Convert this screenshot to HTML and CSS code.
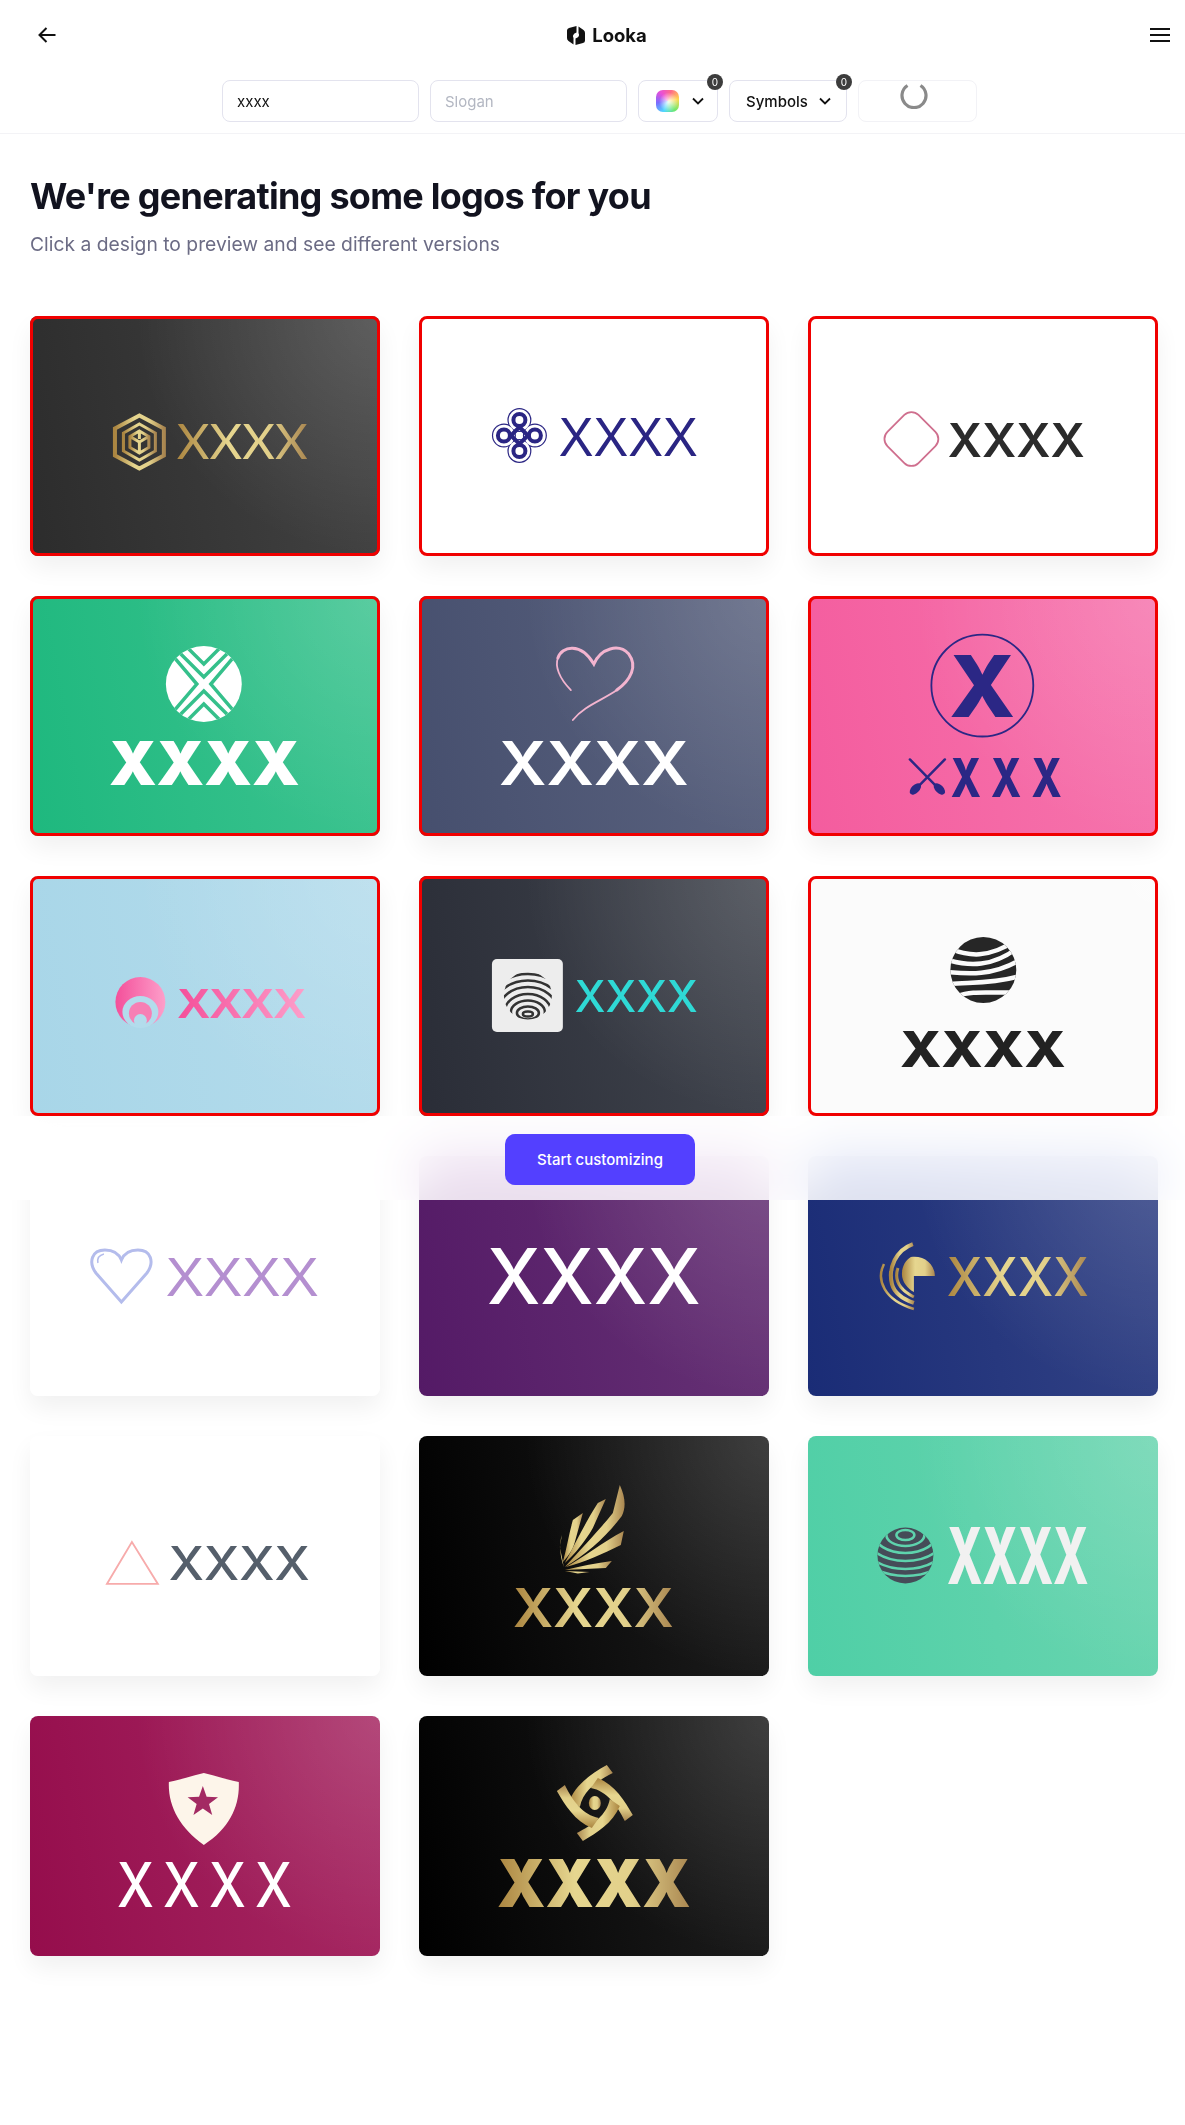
FILE: index.html
```html
<!DOCTYPE html>
<html lang="en">
<head>
    <meta charset="UTF-8">
    <meta name="viewport" content="width=device-width, initial-scale=1.0">
    <title>Looka</title>
    <link rel="stylesheet" href="styles.css">
</head>
<body>

    <!-- Top bar -->
    <header class="topbar">
        <button class="icon-btn">
            <svg width="18" height="18" viewBox="0 0 18 18" fill="none" stroke="#111" stroke-width="2"><path d="M17.5 9H1.5M8.5 2l-7 7 7 7"/></svg>
        </button>
        <div class="brand">
            <svg width="20" height="21" viewBox="0 0 20 20" fill="#111"><path d="M10.500 0.500L3 2.500Q1 3 1 5V12.500Q1 14.500 2.500 15.500L7.500 19V12.500Q5.500 9 10.500 7Z"/><path d="M9.500 19.500L17 17.500Q19 17 19 15V7.500Q19 5.500 17.500 4.500L12.500 1V7.500Q14.500 11 9.500 13Z"/></svg>
            <span>Looka</span>
        </div>
        <button class="icon-btn">
            <svg width="20" height="14" viewBox="0 0 20 14" fill="none" stroke="#111" stroke-width="2"><path d="M0 1H20M0 7H20M0 13H20"/></svg>
        </button>
    </header>

    <!-- Filters -->
    <div class="toolbar">
        <div class="field field-text">xxxx</div>
        <div class="field field-text field-empty">Slogan</div>
        <div class="field field-color">
            <span class="swatch"></span>
            <svg class="chevron" width="12" height="8" viewBox="0 0 12 8" fill="none" stroke="#111" stroke-width="1.8"><path d="M1 1.500l5 5 5-5"/></svg>
            <span class="badge">0</span>
        </div>
        <div class="field field-symbols">
            Symbols
            <svg class="chevron" width="12" height="8" viewBox="0 0 12 8" fill="none" stroke="#111" stroke-width="1.800"><path d="M1 1.500l5 5 5-5"/></svg>
            <span class="badge">0</span>
        </div>
        <div class="field field-loading">
            <svg width="28" height="28" viewBox="0 0 28 28" fill="none" stroke="#8a8a8a" stroke-width="3.200"><path d="M7.500 4.500A12 12 0 1 0 20.500 4.500"/></svg>
        </div>
    </div>

    <div class="intro">
        <h1>We're generating some logos for you</h1>
        <p>Click a design to preview and see different versions</p>
    </div>

    <div class="results">
        <div class="logo-grid">

            <!-- 1 -->
            <div class="card picked bg-graphite">
                <svg class="logo" viewBox="0 0 350 240">
                    <defs>
                        <linearGradient id="gold" x1="0" y1="0" x2="1" y2="0">
                            <stop offset="0" stop-color="#ab8540"/>
                            <stop offset=".4" stop-color="#e6d68f"/>
                            <stop offset=".7" stop-color="#e2d08a"/>
                            <stop offset="1" stop-color="#a98650"/>
                        </linearGradient>
                        <linearGradient id="pink" x1="0" y1="0" x2="1" y2="0">
                            <stop offset="0" stop-color="#f44f9a"/>
                            <stop offset="1" stop-color="#fd9fca"/>
                        </linearGradient>
                        <clipPath id="clip8"><circle cx="109" cy="119.500" r="24"/></clipPath>
                        <clipPath id="clip9"><circle cx="175.500" cy="94" r="33"/></clipPath>
                        <clipPath id="clip15"><circle cx="97.500" cy="119.500" r="28"/></clipPath>
                        <clipPath id="clip4"><circle cx="174" cy="88" r="38"/></clipPath>
                    </defs>
                    <g fill="none" stroke="url(#gold)">
                        <path stroke-width="4" d="M109.500 99.500L134 112.500V139.500L109.500 152.500L85 139.500V112.500Z"/>
                        <path stroke-width="3" d="M109.500 108L125.500 117V135L109.500 144L93.500 135V117Z"/>
                        <path stroke-width="3" d="M109.500 115L119 120.500V131.500L109.500 137L100 131.500V120.500ZM109.500 115V123M100 120.500L109.500 126L119 120.500M109.500 126V137"/>
                    </g>
                    <text class="wm-thin" x="147" y="143" font-size="49" textLength="131" lengthAdjust="spacingAndGlyphs" fill="url(#gold)">XXXX</text>
                </svg>
            </div>

            <!-- 2 -->
            <div class="card picked bg-white">
                <svg class="logo" viewBox="0 0 350 240">
                    <g fill="#2a2583">
                        <circle cx="100.500" cy="104" r="12"/><circle cx="100.500" cy="135" r="12"/>
                        <circle cx="85" cy="119.500" r="12"/><circle cx="116" cy="119.500" r="12"/>
                    </g>
                    <g fill="#fff">
                        <circle cx="100.500" cy="104" r="10.800"/><circle cx="100.500" cy="135" r="10.800"/>
                        <circle cx="85" cy="119.500" r="10.800"/><circle cx="116" cy="119.500" r="10.800"/>
                    </g>
                    <g fill="none" stroke="#2a2583" stroke-width="4">
                        <circle cx="100.500" cy="104" r="6"/><circle cx="100.500" cy="135" r="6"/>
                        <circle cx="85" cy="119.500" r="6"/><circle cx="116" cy="119.500" r="6"/>
                        <path d="M100.500 111L109 119.500L100.500 128L92 119.500Z"/>
                    </g>
                    <text class="wm-regular" x="140" y="140" font-size="56" textLength="139" lengthAdjust="spacingAndGlyphs" fill="#2a2583">XXXX</text>
                </svg>
            </div>

            <!-- 3 -->
            <div class="card picked bg-white">
                <svg class="logo" viewBox="0 0 350 240">
                    <rect x="81.500" y="101" width="44" height="44" rx="10" transform="rotate(45 103.500 123)" fill="none" stroke="#cf6f8e" stroke-width="1.800"/>
                    <text class="wm-semi" x="140" y="141" font-size="46" textLength="137" lengthAdjust="spacingAndGlyphs" fill="#2b2b2b">XXXX</text>
                </svg>
            </div>

            <!-- 4 -->
            <div class="card picked bg-green">
                <svg class="logo" viewBox="0 0 350 240">
                    <circle cx="174" cy="88" r="38" fill="#fff"/>
                    <g clip-path="url(#clip4)" fill="none" stroke="#35c08b" stroke-width="3.500">
                        <path d="M134 41L174 81L214 41M134 28L174 68L214 28"/>
                        <path d="M134 135L174 95L214 135M134 148L174 108L214 148"/>
                        <path d="M127 41L167 88L127 135M221 41L181 88L221 135" stroke-width="3.500"/>
                    </g>
                    <text class="wm-heavy" x="79" y="189" font-size="61" textLength="191" lengthAdjust="spacingAndGlyphs" fill="#fff">XXXX</text>
                </svg>
            </div>

            <!-- 5 -->
            <div class="card picked bg-slate">
                <svg class="logo" viewBox="0 0 350 240">
                    <g fill="none" stroke="#f3b4cf" stroke-linecap="round">
                        <path stroke-width="3" d="M139 62C143 50 162 46 175 68C182 52 200 47 210 58C219 70 212 84 198 94"/>
                        <path stroke-width="1.800" d="M139 62C136 70 140 82 152 94M198 94C184 104 165 110 154 124"/>
                    </g>
                    <text class="wm-semi" x="80" y="189" font-size="61" textLength="190" lengthAdjust="spacingAndGlyphs" fill="#fff">XXXX</text>
                </svg>
            </div>

            <!-- 6 -->
            <div class="card picked bg-pink">
                <svg class="logo" viewBox="0 0 350 240">
                    <circle cx="174.500" cy="89.500" r="51" fill="none" stroke="#2b2785" stroke-width="1.800"/>
                    <text class="wm-black" x="174.500" y="121" font-size="85" text-anchor="middle" textLength="66" lengthAdjust="spacingAndGlyphs" fill="#2b2785">X</text>
                    <g fill="none" stroke="#2b2785" stroke-width="2.500" stroke-linecap="round">
                        <path d="M102 163.500L131 193M137 163.500L108 193"/>
                    </g>
                    <g fill="#2b2785">
                        <ellipse cx="131.500" cy="193" rx="7" ry="4" transform="rotate(45 131.500 193)"/>
                        <ellipse cx="107.500" cy="193" rx="7" ry="4" transform="rotate(-45 107.500 193)"/>
                    </g>
                    <text class="wm-black" transform="scale(.75 1)" x="190.500" y="201" font-size="53" textLength="148" lengthAdjust="spacing" fill="#2b2785">XXX</text>
                </svg>
            </div>

            <!-- 7 -->
            <div class="card picked bg-sky">
                <svg class="logo" viewBox="0 0 350 240">
                    <circle cx="110.500" cy="126" r="25" fill="url(#pink)"/>
                    <ellipse cx="110.500" cy="136" rx="18" ry="16" fill="#b3dcec"/>
                    <circle cx="110.500" cy="137.500" r="11.500" fill="#f77fb4"/>
                    <circle cx="110.500" cy="144.500" r="6.500" fill="#b3dcec"/>
                    <text class="wm-bold" x="148" y="142" font-size="43" textLength="128" lengthAdjust="spacingAndGlyphs" fill="url(#pink)">XXXX</text>
                </svg>
            </div>

            <!-- 8 -->
            <div class="card picked bg-ink">
                <svg class="logo" viewBox="0 0 350 240">
                    <rect x="73" y="83" width="71" height="73" rx="5" fill="#ededed"/>
                    <g clip-path="url(#clip8)" fill="none" stroke="#333" stroke-width="2.500">
                        <ellipse cx="109" cy="138" rx="5" ry="2.500"/>
                        <ellipse cx="109" cy="137" rx="11" ry="6.500"/>
                        <ellipse cx="109" cy="136" rx="17" ry="11.500"/>
                        <ellipse cx="109" cy="135" rx="23" ry="17"/>
                        <ellipse cx="109" cy="134" rx="29" ry="23"/>
                        <ellipse cx="109" cy="134" rx="35" ry="29.500"/>
                        <ellipse cx="109" cy="134" rx="41" ry="36"/>
                    </g>
                    <text class="wm-medium" x="156" y="136" font-size="44" textLength="123" lengthAdjust="spacingAndGlyphs" fill="#2fd9d5">XXXX</text>
                </svg>
            </div>

            <!-- 9 -->
            <div class="card picked bg-offwhite">
                <svg class="logo" viewBox="0 0 350 240">
                    <circle cx="175.500" cy="94" r="33" fill="#262626"/>
                    <g clip-path="url(#clip9)" fill="none" stroke="#fbfbfb" stroke-width="4.500">
                        <path d="M140 72C160 80 180 84 212 62"/>
                        <path d="M140 84C160 90 185 92 212 70"/>
                        <path d="M140 96C160 98 185 100 212 84"/>
                        <path d="M142 108C160 106 185 108 212 100"/>
                        <path d="M150 120C165 114 185 118 212 116"/>
                    </g>
                    <text class="wm-black" x="92" y="191" font-size="50" textLength="166" lengthAdjust="spacingAndGlyphs" fill="#222">XXXX</text>
                </svg>
            </div>

            <!-- 10 -->
            <div class="card bg-white">
                <svg class="logo" viewBox="0 0 350 240">
                    <path d="M91.500 146L66 117C58 106 62 94 75 94C83 94 89 98 91.500 104C94 98 100 94 108 94C121 94 125 106 117 117Z" fill="none" stroke="#b4bcec" stroke-width="3"/>
                    <path d="M68 107C67 102 70 99 74 98" fill="none" stroke="#b4bcec" stroke-width="1.500"/>
                    <text class="wm-regular" x="136" y="140" font-size="56" textLength="153" lengthAdjust="spacingAndGlyphs" fill="#b48fd0">XXXX</text>
                </svg>
            </div>

            <!-- 11 -->
            <div class="card bg-purple">
                <svg class="logo" viewBox="0 0 350 240">
                    <text class="wm-medium" x="68" y="148" font-size="77" textLength="214" lengthAdjust="spacingAndGlyphs" fill="#fff">XXXX</text>
                </svg>
            </div>

            <!-- 12 -->
            <div class="card bg-navy">
                <svg class="logo" viewBox="0 0 350 240">
                    <path d="M103 101C116 99 127 108 127 120L106 120L106 136C100 133 94 126 94 118C94 110 98 104 103 101Z" fill="url(#gold)"/>
                    <g fill="none" stroke="url(#gold)">
                        <path stroke-width="4" d="M105 88C88 94 80 112 84 128C86 136 92 142 106 147"/>
                        <path stroke-width="2.500" d="M76 108C68 124 76 144 106 153"/>
                        <path stroke-width="3" d="M90 112C86 124 92 134 106 141"/>
                    </g>
                    <text class="wm-medium" x="139" y="140" font-size="53" textLength="142" lengthAdjust="spacingAndGlyphs" fill="url(#gold)">XXXX</text>
                </svg>
            </div>

            <!-- 13 -->
            <div class="card bg-white">
                <svg class="logo" viewBox="0 0 350 240">
                    <path d="M102 106L128 148H77Z" fill="none" stroke="#f7abab" stroke-width="1.800"/>
                    <text class="wm-medium" x="139" y="144" font-size="46" textLength="141" lengthAdjust="spacingAndGlyphs" fill="#555f6b">XXXX</text>
                </svg>
            </div>

            <!-- 14 -->
            <div class="card bg-black">
                <svg class="logo" viewBox="0 0 350 240">
                    <g fill="url(#gold)" transform="translate(-2 0)">
                        <path d="M203 49C209 62 209 72 205 80C190 100 170 118 148 131C165 112 186 90 196 77Z"/>
                        <path d="M189 63L176 92C168 106 158 118 148 127C158 108 170 84 181 67Z"/>
                        <path d="M166 77L158 106C156 114 150 122 146 126C150 112 152 98 156 84Z"/>
                        <path d="M145 99L143 111L147 131C143 120 142 108 145 99Z"/>
                        <path d="M207 95L204 109C186 118 168 126 149 131C166 122 186 106 207 95Z"/>
                        <path d="M195 125L189 132L148 134C164 130 180 127 195 125Z"/>
                        <path d="M173 136L148 135L161 137.500Z"/>
                    </g>
                    <text class="wm-semi" x="94" y="191" font-size="53" textLength="161" lengthAdjust="spacingAndGlyphs" fill="url(#gold)">XXXX</text>
                </svg>
            </div>

            <!-- 15 -->
            <div class="card bg-mint">
                <svg class="logo" viewBox="0 0 350 240">
                    <circle cx="97.500" cy="119.500" r="28" fill="#454c58"/>
                    <g clip-path="url(#clip15)" fill="none" stroke="#5ed3ad" stroke-width="2.500">
                        <ellipse cx="97.500" cy="99" rx="9" ry="5"/>
                        <ellipse cx="97.500" cy="99" rx="19" ry="11"/>
                        <ellipse cx="97.500" cy="97" rx="32" ry="20"/>
                        <ellipse cx="97.500" cy="96" rx="42" ry="29"/>
                        <ellipse cx="97.500" cy="94" rx="50" ry="39"/>
                        <ellipse cx="97.500" cy="92" rx="58" ry="48"/>
                    </g>
                    <text class="wm-black" transform="scale(.6 1)" x="232" y="148" font-size="78" textLength="236" lengthAdjust="spacing" fill="#f1f1f1">XXXX</text>
                </svg>
            </div>

            <!-- 16 -->
            <div class="card bg-wine">
                <svg class="logo" viewBox="0 0 350 240">
                    <path d="M174 57C186 60 198 64 209 66C210 90 200 112 174 129C150 112 138 90 139 66C150 64 162 60 174 57Z" fill="#fdf5ea"/>
                    <path d="M173 70L176.800 80.700L188.200 81.100L179.200 88L182.400 99L173 92.500L163.600 99L166.800 88L157.800 81.100L169.200 80.700Z" fill="#a32a63"/>
                    <text class="wm-medium" transform="scale(.85 1)" x="102.500" y="191" font-size="62" textLength="206" lengthAdjust="spacing" fill="#fff">XXXX</text>
                </svg>
            </div>

            <!-- 17 -->
            <div class="card bg-black">
                <svg class="logo" viewBox="0 0 350 240">
                    <g transform="translate(176 87)" fill="url(#gold)">
                        <ellipse rx="6" ry="7"/>
                        <path id="blade" d="M12-38C-2-30-18-20-25-3L-15 4C-12-12 2-22 18-30Z"/>
                        <use href="#blade" transform="rotate(90)"/>
                        <use href="#blade" transform="rotate(180)"/>
                        <use href="#blade" transform="rotate(270)"/>
                    </g>
                    <text class="wm-heavy" x="78" y="191" font-size="66" textLength="194" lengthAdjust="spacingAndGlyphs" fill="url(#gold)">XXXX</text>
                </svg>
            </div>
        </div>

        <!-- Frosted bar over the grid -->
        <div class="cta-bar">
            <button class="cta">Start customizing</button>
        </div>
    </div>

</body>
</html>
```
FILE: styles.css
```css
* {
    box-sizing: border-box;
}
body {
    margin: 0;
    min-height: 2125px;
    font-family: Inter, "Noto Sans", sans-serif;
    background-color: #fff;
    color: #111;
}
button {
    font-family: inherit;
    border: none;
    background: none;
    padding: 0;
    cursor: pointer;
}

/* top bar */
.topbar {
    height: 70px;
    display: flex;
    align-items: center;
    justify-content: space-between;
    padding: 0 15px 0 38px;
}
.icon-btn {
    display: flex;
}
.brand {
    display: flex;
    align-items: center;
    gap: 6px;
    margin-left: 7px;
    font-size: 18.5px;
    font-weight: 700;
}

/* filters */
.toolbar {
    display: flex;
    justify-content: center;
    gap: 11px;
    padding: 10px 0 11px 14px;
    border-bottom: 1px solid #f3f3f6;
}
.field {
    position: relative;
    height: 42px;
    display: flex;
    align-items: center;
    border: 1px solid #e3e3ee;
    border-radius: 8px;
    font-size: 15px;
}
.field-text {
    width: 197px;
    padding-left: 14px;
}
.field-empty {
    color: #b3b7c2;
}
.field-color {
    width: 80px;
    padding-left: 17px;
    gap: 13px;
}
.field-symbols {
    width: 118px;
    padding-left: 16px;
    gap: 11px;
    font-weight: 500;
}
.field-loading {
    width: 119px;
    align-items: flex-start;
    padding: 0 0 0 41px;
    border-color: #f2f2f6;
}
.swatch {
    width: 23px;
    height: 22px;
    border-radius: 7px;
    background:
        radial-gradient(circle at 55% 55%, rgba(255, 255, 255, 0.9) 0, rgba(255, 255, 255, 0) 55%),
        conic-gradient(from 200deg, #4fd8ff, #7a6cff, #e84fd8, #ff6a8a, #ffd84f, #6fe86a, #4fd8ff);
}
.badge {
    position: absolute;
    top: -7px;
    right: -6px;
    width: 16px;
    height: 16px;
    border-radius: 50%;
    background-color: #3c3c3c;
    color: #fff;
    font-size: 10px;
    font-weight: 400;
    line-height: 16px;
    text-align: center;
}

/* heading */
.intro {
    padding: 40px 30px 0;
}
.intro h1 {
    margin: 0 0 12px;
    font-size: 36px;
    line-height: 44px;
    font-weight: 700;
    letter-spacing: -0.74px;
    color: #12131f;
}
.intro p {
    margin: 0;
    font-size: 19.3px;
    line-height: 28px;
    color: #6c6c85;
}

/* logos */
.results {
    position: relative;
    margin-top: 58px;
    padding: 0 27px 0 30px;
}
.logo-grid {
    display: grid;
    grid-template-columns: repeat(3, 1fr);
    grid-auto-rows: 240px;
    column-gap: 39.5px;
    row-gap: 40px;
}
.card {
    border-radius: 8px;
    overflow: hidden;
    box-shadow: 0 12px 24px rgba(0, 0, 0, 0.06);
    background:
        radial-gradient(ellipse 70% 100% at 100% 0, rgba(255, 255, 255, 0.14), rgba(255, 255, 255, 0)),
        linear-gradient(80deg, var(--from), var(--to));
}
.card.picked {
    outline: 3.5px solid #f00000;
    outline-offset: -3.5px;
}
.logo {
    display: block;
    width: 100%;
    height: 100%;
    filter: blur(0.35px);
}

.bg-white { --from: #fff; --to: #fff; }
.bg-offwhite { --from: #fbfbfb; --to: #fbfbfb; }
.bg-graphite { --from: #2c2c2c; --to: #444; }
.bg-green { --from: #1eb87e; --to: #3fc491; }
.bg-slate { --from: #464f6e; --to: #5c6480; }
.bg-pink { --from: #f45c9e; --to: #f676ae; }
.bg-sky { --from: #a8d6e8; --to: #b5dcec; }
.bg-ink { --from: #2a2d37; --to: #42464f; }
.bg-purple { --from: #541a66; --to: #673476; }
.bg-navy { --from: #1a2c76; --to: #344486; }
.bg-black { --from: #000; --to: #1f1f1f; }
.bg-mint { --from: #4fcfa6; --to: #6bd5b0; }
.bg-wine { --from: #950d4c; --to: #a72a64; }

.wm-thin { font-family: Lato, sans-serif; font-weight: 400; }
.wm-regular { font-family: "Liberation Sans", sans-serif; font-weight: 400; }
.wm-medium { font-family: Inter, sans-serif; font-weight: 500; }
.wm-semi { font-family: Inter, sans-serif; font-weight: 600; }
.wm-bold { font-family: "Liberation Sans", sans-serif; font-weight: 700; }
.wm-black { font-family: Inter, sans-serif; font-weight: 800; }
.wm-heavy { font-family: Inter, sans-serif; font-weight: 900; }

/* frosted bar */
.cta-bar {
    position: absolute;
    top: 800px;
    left: 0;
    right: 0;
    height: 84px;
    display: flex;
    justify-content: center;
    align-items: flex-start;
    padding: 18px 0 0 15px;
    background-color: rgba(255, 255, 255, 0.86);
    backdrop-filter: saturate(180%) blur(26px);
}
.cta {
    width: 190px;
    height: 51px;
    border-radius: 10px;
    background-color: #5340ff;
    color: #fff;
    font-size: 15px;
    font-weight: 500;
}
```
